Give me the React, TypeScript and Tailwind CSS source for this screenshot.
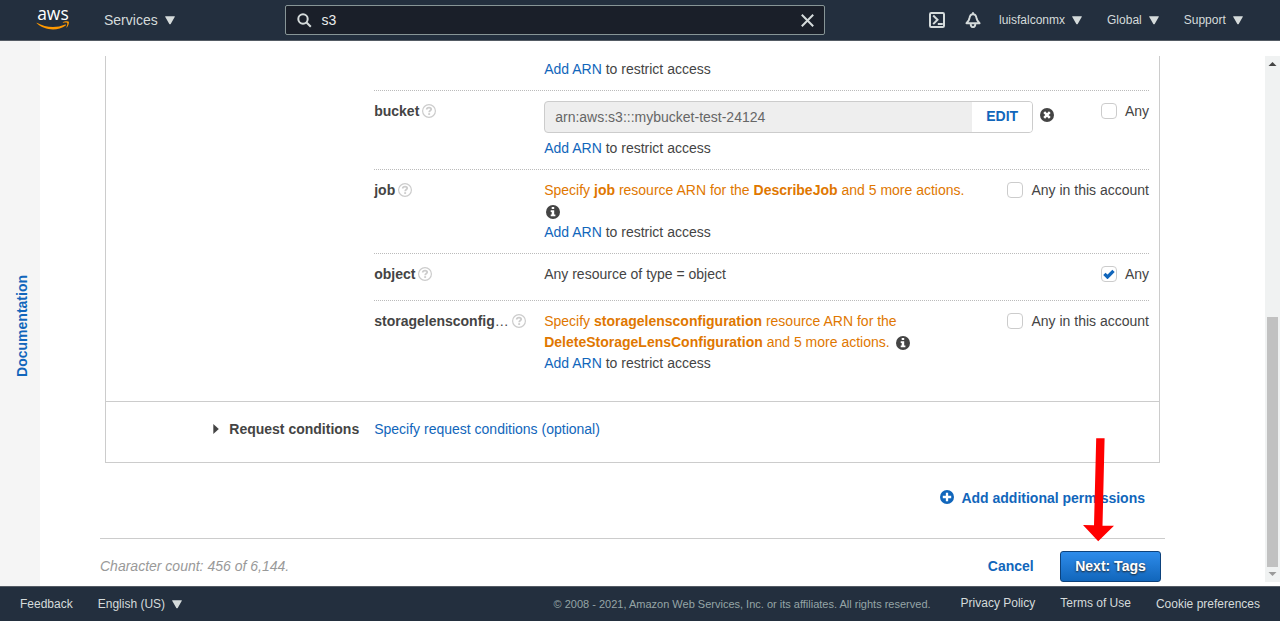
import type { ReactNode } from "react";

function Caret({ className = "" }: { className?: string }) {
  return (
    <svg className={className} width="10" height="9" viewBox="0 0 10 9" fill="#d5dbdb">
      <path d="M.7.2h8.600c.5 0 .7.500.4.900L5.700 7.900c-.4.600-1 .600-1.400 0L.3 1.100C0 .7.200.2.7.200Z" />
    </svg>
  );
}

function AwsLogo() {
  return (
    <svg width="34" height="24" viewBox="0 0 34 24" className="shrink-0 overflow-visible">
      <text
        x="1.200"
        y="12"
        fill="#fff"
        fontFamily="'Open Sans', sans-serif"
        fontWeight="500"
        fontSize="18.500"
        textLength="31.500"
        lengthAdjust="spacingAndGlyphs"
      >
        aws
      </text>
      <path
        d="M.9 14.700C5.700 17.500 11.200 19.100 17 19.100c4 0 8.200-.8 12.200-2.500.6-.3 1.100.4.500.9-3.500 2.600-8.400 4-12.700 4C10.900 21.500 5.100 19.300.8 15.300c-.4-.3-.1-.8.100-.6Z"
        fill="#f90"
      />
      <path
        d="M31.200 14.900c-.5-.6-3-.3-4.200-.1-.3 0-.4-.3-.1-.5 2-1.500 5.500-1.100 5.900-.5.4.5-.1 4-2 5.600-.3.200-.6.100-.4-.2.400-1.100 1.300-3.700.8-4.300Z"
        fill="#f90"
      />
    </svg>
  );
}

function Help() {
  return (
    <svg width="14" height="14" viewBox="0 0 14 14" className="mb-px shrink-0" fill="none">
      <circle cx="7" cy="7" r="6.400" stroke="#ccc" strokeWidth="1.200" />
      <path d="M4.700 5.500c.1-1.300 1.100-1.900 2.300-1.900s2.200.7 2.200 1.700c0 1.300-2 1.300-2 3" stroke="#ccc" strokeWidth="1.800" />
      <path d="M6.200 9.200h1.900v1.700H6.200z" fill="#ccc" />
    </svg>
  );
}

function Info({ className = "" }: { className?: string }) {
  return (
    <svg width="14" height="14" viewBox="0 0 14 14" className={className}>
      <circle cx="7" cy="7" r="7" fill="#444" />
      <path d="M5.700 2h2.500v2H5.700zM4.700 5.200h3.500v4.300h1.200v1.700H4.700V9.500h1V6.900h-1z" fill="#fff" />
    </svg>
  );
}

function CheckBox({ label, checked = false }: { label: string; checked?: boolean }) {
  return (
    <div className="ml-auto flex h-[21px] shrink-0 items-center gap-2">
      <span className="mb-px flex size-4 items-center justify-center rounded-[4px] border border-[#ccc] bg-white">
        {checked && (
          <svg width="12" height="10" viewBox="0 0 12 10" fill="none" className="shrink-0">
            <path d="M1.400 4.900 4.500 8 10.500 1.800" stroke="#1166bb" strokeWidth="3.300" />
          </svg>
        )}
      </span>
      <span>{label}</span>
    </div>
  );
}

function AddArn() {
  return (
    <div>
      <a className="text-[#1166bb]">Add ARN</a> to restrict access
    </div>
  );
}

function Row({ name, any, checked, className = "pb-[10px]", children }: {
  name: ReactNode;
  any: string;
  checked?: boolean;
  className?: string;
  children: ReactNode;
}) {
  return (
    <div className={"flex border-t border-dotted border-[#bbb] pt-[10px] " + className}>
      <div className="flex h-[21px] w-[170px] shrink-0 items-center gap-[3px] font-bold">
        <span>{name}</span>
        <Help />
      </div>
      <div className="whitespace-nowrap">{children}</div>
      <CheckBox label={any} checked={checked} />
    </div>
  );
}

function Header() {
  return (
    <header className="flex h-[41px] shrink-0 items-center border-b border-[#545b64] bg-[#232f3e] pl-9 text-[#d5dbdb]">
      <AwsLogo />
      <span className="ml-[34px] w-[54px] text-[14px]">Services</span>
      <Caret className="ml-[7px]" />
      <div className="ml-[110px] flex h-[30px] w-[540px] items-center rounded-[2px] border border-[#879596] bg-[#1a1f29] pr-[10px] pl-[11px]">
        <svg width="15" height="15" viewBox="0 0 15 15" fill="none" stroke="#d5dbdb" strokeWidth="2">
          <circle cx="6" cy="6" r="4.700" />
          <path d="m9.500 9.500 4.300 4.300" />
        </svg>
        <span className="ml-[9.500px] text-[14px] text-[#eaeded]">s3</span>
        <svg className="ml-auto" width="13" height="13" viewBox="0 0 13 13" fill="none" stroke="#d5dbdb" strokeWidth="2">
          <path d="m.8.8 11.400 11.400M12.200.8.8 12.200" />
        </svg>
      </div>
      <svg className="ml-[104px]" width="16" height="16" viewBox="0 0 16 16" fill="none" stroke="#d5dbdb" strokeWidth="2">
        <rect x="1" y="1" width="14" height="14" rx="1.200" />
        <path d="m4.200 3.500 4.300 4.300-4.300 4.300" strokeWidth="2" />
        <path d="M8.800 12h5" strokeWidth="2" />
      </svg>
      <svg className="ml-5" width="16" height="16" viewBox="0 0 16 16" fill="none" stroke="#d5dbdb" strokeWidth="1.900">
        <path d="M8 .2v2M1.400 11.200h13.200c-2-1.700-2.700-2.700-3-4.700C11.300 4 10 2.200 8 2.200S4.700 4 4.400 6.500c-.3 2-1 3-3 4.700Z" strokeLinejoin="round" />
        <path d="M5.700 12c0 4.100 4.600 4.100 4.600 0" />
      </svg>
      <span className="ml-[18px] text-[12px]">luisfalconmx</span>
      <Caret className="ml-[7px]" />
      <span className="ml-[25px] text-[12px]">Global</span>
      <Caret className="ml-[7px]" />
      <span className="ml-[25px] text-[12px]">Support</span>
      <Caret className="ml-[7px]" />
    </header>
  );
}

function Scrollbar() {
  return (
    <div className="mt-[15px] flex h-[526px] w-[15px] shrink-0 flex-col items-center bg-[#f0f2f2]">
      <svg width="15" height="15" viewBox="0 0 15 15" fill="#444">
        <path d="M3.500 10h8l-4-4z" />
      </svg>
      <div className="mt-[246px] h-[250px] w-[11px] bg-[#c1c1c1]" />
      <svg width="15" height="15" viewBox="0 0 15 15" fill="#9a9a9a">
        <path d="M3.500 5h8l-4 4z" />
      </svg>
    </div>
  );
}

function Permissions() {
  return (
    <section className="relative ml-[5px] w-[1055px] border-x border-b border-[#ccc]">
      <div className="h-[345px] pt-[3px] pr-[10px] pl-[268.200px]">
        <div className="pb-[10px] pl-[170px]">
          <AddArn />
        </div>
        <Row name="bucket" any="Any">
          <div className="mb-[5px] flex items-center">
            <div className="flex h-8 w-[489px] overflow-hidden rounded-[4px] border border-[#ccc] bg-[#eee]">
              <span className="grow pl-[10px] leading-[31px] text-[#666]">arn:aws:s3:::mybucket-test-24124</span>
              <button className="w-[60px] bg-white pb-px font-bold text-[#1166bb]">EDIT</button>
            </div>
            <svg className="mb-1 ml-[7px]" width="14" height="14" viewBox="0 0 14 14">
              <circle cx="7" cy="7" r="7" fill="#444" />
              <path d="m4.200 4.200 5.600 5.600m0-5.600L4.200 9.800" stroke="#fff" strokeWidth="2.500" />
            </svg>
          </div>
          <AddArn />
        </Row>
        <Row name="job" any="Any in this account">
          <div className="text-[#e07700]">
            Specify <b>job</b> resource ARN for the <b>DescribeJob</b> and 5 more actions.
          </div>
          <div className="flex h-[21px] items-center">
            <Info className="mt-px ml-[2px]" />
          </div>
          <AddArn />
        </Row>
        <Row name="object" any="Any" checked className="pb-[15px]">
          Any resource of type = object
        </Row>
        <Row name={<>storagelensconfig<span className="font-normal">…</span></>} any="Any in this account">
          <div className="text-[#e07700]">
            Specify <b>storagelensconfiguration</b> resource ARN for the
          </div>
          <div className="flex items-center text-[#e07700]">
            <span>
              <b>DeleteStorageLensConfiguration</b> and 5 more actions.
            </span>
            <Info className="mt-px ml-[6.700px]" />
          </div>
          <AddArn />
        </Row>
      </div>
      <div className="flex h-[61px] items-start border-t border-[#ccc] pt-[17px]">
        <div className="flex w-[268.200px] items-center justify-end gap-[10px] pr-[15px] font-bold">
          <svg className="mb-px" width="6" height="10" viewBox="0 0 6 10" fill="#444">
            <path d="M.3 0 5.800 5 .3 10z" />
          </svg>
          Request conditions
        </div>
        <a className="text-[#1166bb]">Specify request conditions (optional)</a>
      </div>
      <svg className="absolute top-[382px] left-[977px]" width="32" height="104" viewBox="0 0 32 104">
        <path d="M13.200.3h8.400l-2.100 87.500H31L15.200 103.300 0 86.900l11 .4z" fill="#f00" />
      </svg>
    </section>
  );
}

function Footer() {
  return (
    <footer className="flex h-[35px] shrink-0 items-center border-t border-[#545b64] bg-[#232f3e] px-5 text-[12px] text-[#d5dbdb]">
      <span>Feedback</span>
      <span className="ml-[25px]">English (US)</span>
      <Caret className="ml-[7px]" />
      <span className="ml-auto text-[11px] text-[#95a5a6]">
        © 2008 - 2021, Amazon Web Services, Inc. or its affiliates. All rights reserved.
      </span>
      <span className="ml-[30px] pb-[2px]">Privacy Policy</span>
      <span className="ml-[25px] pb-[2px]">Terms of Use</span>
      <span className="ml-[25px]">Cookie preferences</span>
    </footer>
  );
}

export default function App() {
  return (
    <div className="flex h-[621px] w-[1280px] flex-col overflow-hidden bg-white font-['Liberation_Sans',Arial,sans-serif] text-[14px] leading-[21px] text-[#444]">
      <Header />
      <div className="flex min-h-0 grow">
        <aside className="flex w-10 shrink-0 items-center justify-center bg-[#f5f5f5] pt-[25px] pl-1">
          <span className="rotate-180 font-bold text-[#1166bb] [writing-mode:vertical-rl]">Documentation</span>
        </aside>
        <main className="grow pt-[15px] pl-[60px]">
          <Permissions />
          <div className="flex h-[75px] items-center gap-[7px] pr-[120px] pb-[5px] text-[#1166bb]">
            <svg className="mb-[2px] ml-auto" width="14" height="14" viewBox="0 0 14 14">
              <circle cx="7" cy="7" r="7" fill="#1166bb" />
              <path d="M7 2.800v8.400M2.800 7h8.400" stroke="#fff" strokeWidth="2.300" />
            </svg>
            <b>Add additional permissions</b>
          </div>
          <div className="flex w-[1065px] items-center border-t border-[#ccc] pt-3 pr-1">
            <i className="text-[#999]">Character count: 456 of 6,144.</i>
            <b className="ml-auto text-[#1166bb]">Cancel</b>
            <button className="ml-[26.300px] h-[31px] w-[101px] rounded-[3px] border border-[#0d427c] bg-linear-to-b from-[#2d8ceb] to-[#1166bb] font-bold text-white [text-shadow:0_1px_2px_#222]">
              Next: Tags
            </button>
          </div>
        </main>
        <Scrollbar />
      </div>
      <Footer />
    </div>
  );
}
